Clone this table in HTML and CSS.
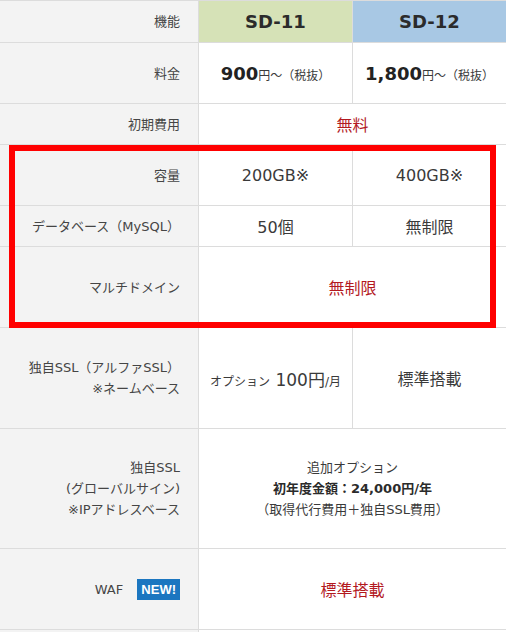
FILE: index.html
```html
<!DOCTYPE html>
<html lang="ja">
<head>
<meta charset="utf-8">
<link rel="stylesheet" href="styles.css">
</head>
<body>
<div class="wrap">
  <div class="grid">
    <div class="lab"><span class="txt">機能</span></div>
    <div class="head green">SD-11</div>
    <div class="head blue">SD-12</div>

    <div class="lab"><span class="txt">料金</span></div>
    <div class="val"><span class="price"><b>900</b>円～（税抜）</span></div>
    <div class="val"><span class="price"><b>1,800</b>円～（税抜）</span></div>

    <div class="lab"><span class="txt">初期費用</span></div>
    <div class="val span red">無料</div>

    <div class="lab"><span class="txt">容量</span></div>
    <div class="val">200GB※</div>
    <div class="val">400GB※</div>

    <div class="lab"><span class="txt">データベース（MySQL）</span></div>
    <div class="val">50個</div>
    <div class="val">無制限</div>

    <div class="lab"><span class="txt">マルチドメイン</span></div>
    <div class="val span red">無制限</div>

    <div class="lab"><span class="txt">独自SSL（アルファSSL）<br>※ネームベース</span></div>
    <div class="val"><span class="opt"><small>オプション</small> 100円<small>/月</small></span></div>
    <div class="val">標準搭載</div>

    <div class="lab"><span class="txt">独自SSL<br>(グローバルサイン)<br>※IPアドレスベース</span></div>
    <div class="val span"><span class="multi">追加オプション<br><b>初年度金額：24,000円/年</b><br>（取得代行費用＋独自SSL費用）</span></div>

    <div class="lab"><span class="txt">WAF <span class="new">NEW!</span></span></div>
    <div class="val span red">標準搭載</div>

    <div class="lab"></div>
    <div class="val span"></div>
  </div>
  <div class="highlight"></div>
</div>
</body>
</html>
```
FILE: styles.css
```css
html, body {
  margin: 0;
  padding: 0;
  background: #fff;
}
body {
  font-family: "DejaVu Sans", "Noto Sans CJK JP", sans-serif;
  color: #333;
  overflow: hidden;
  height: 632px;
}
.wrap {
  position: relative;
  width: 506px;
  height: 632px;
  overflow: hidden;
}
.grid {
  display: grid;
  grid-template-columns: 198px 153px 153px;
  grid-template-rows: 41px 60px 40px 60px 40px 80px 100px 119px 80px 2px;
  gap: 1px;
  padding-top: 1px;
  background: #dcdcdc;
}
.grid > div {
  display: flex;
  align-items: center;
}
.lab {
  background: #f3f3f3;
  justify-content: flex-end;
  text-align: right;
  padding-right: 18px;
  font-size: 13px;
  line-height: 21px;
  color: #454545;
}
.txt { display: block; }
.head {
  justify-content: center;
  font-size: 18px;
  font-weight: bold;
  color: #2b2b2b;
}
.green { background: #d6e2b7; }
.blue { background: #a8c8e4; }
.val {
  background: #fff;
  justify-content: center;
  text-align: center;
  font-size: 16px;
  color: #3a3a3a;
}
.span { grid-column: span 2; }
.red { color: #b3191f; }
.price {
  font-size: 12px;
  font-family: "Noto Sans CJK JP", sans-serif;
}
.price b {
  font-family: "DejaVu Sans", sans-serif;
  font-size: 18px;
  font-weight: bold;
  color: #222;
}
.opt { font-size: 17px; }
.opt small { font-size: 12px; }
.multi {
  display: block;
  font-size: 13px;
  line-height: 21px;
}
.multi b { font-weight: bold; color: #2b2b2b; }
.new {
  display: inline-block;
  margin-left: 10px;
  background: #1b76c0;
  color: #fff;
  font-weight: bold;
  font-family: "Liberation Sans", sans-serif;
  font-size: 13px;
  line-height: 21px;
  padding: 0 4px;
}
.highlight {
  position: absolute;
  left: 9px;
  top: 145px;
  width: 475px;
  height: 171px;
  border: 6px solid #ff0000;
}
```
